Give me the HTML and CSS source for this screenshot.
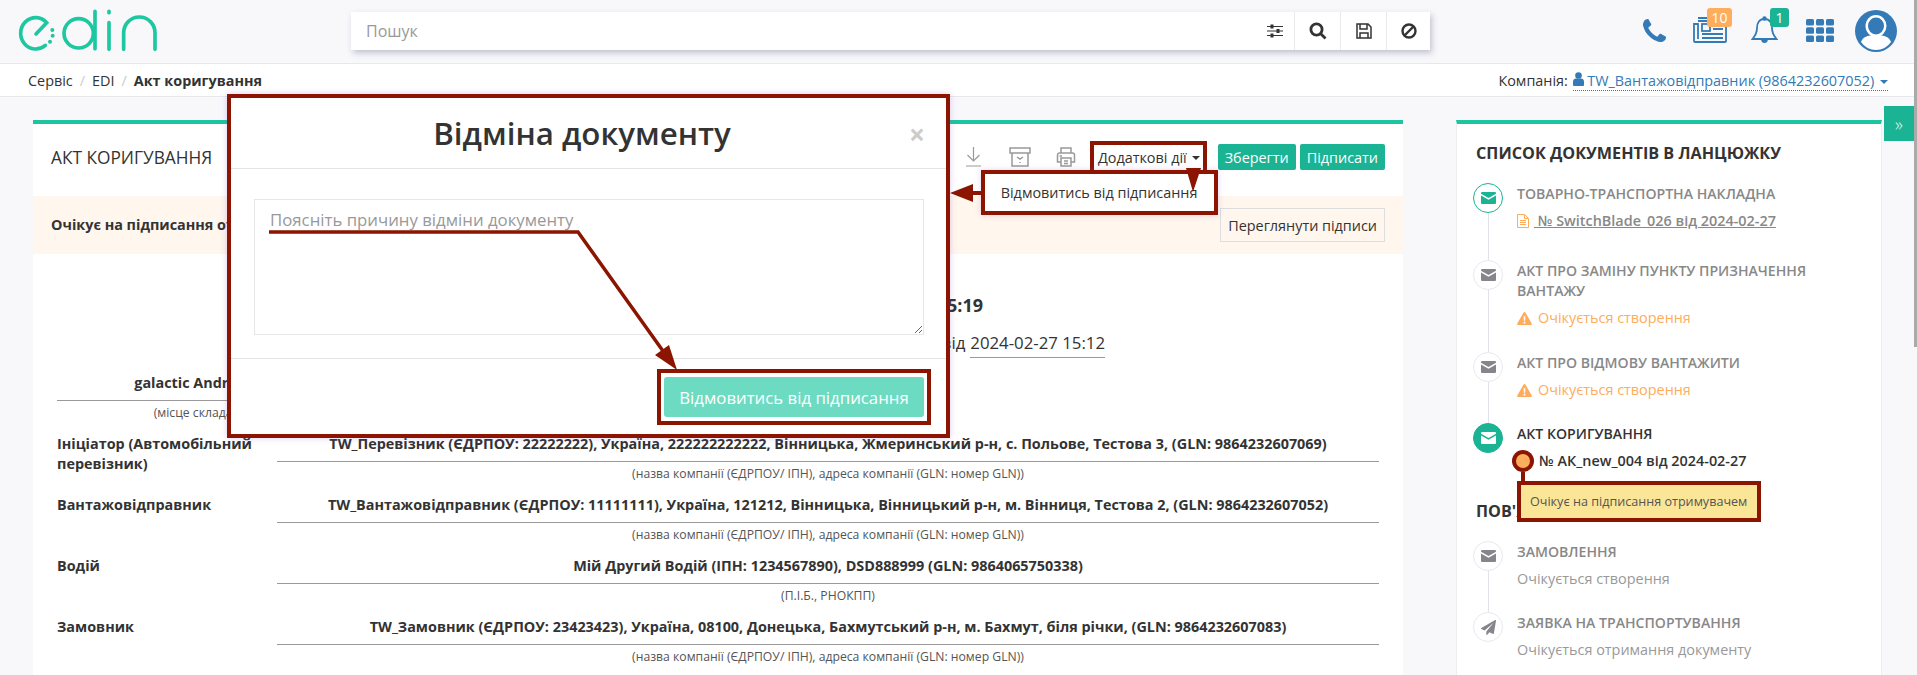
FILE: index.html
```html
<!DOCTYPE html>
<html lang="uk">
<head>
    <meta charset="UTF-8">
    <title>Акт коригування</title>
    <link rel="stylesheet" href="styles.css">
</head>
<body>
    <svg class="icon-defs" width="0" height="0">
        <symbol id="i-mail" viewBox="0 0 20 16">
            <path d="M1.500 0h17A1.500 1.500 0 0 1 20 1.500v.8L10 8 0 2.300v-.8A1.500 1.500 0 0 1 1.500 0zM0 4.600l10 5.700 10-5.700v9.900a1.500 1.500 0 0 1-1.500 1.500h-17A1.500 1.500 0 0 1 0 14.500z"/>
        </symbol>
        <symbol id="i-warn" viewBox="0 0 16 14">
            <path fill-rule="evenodd" d="M8 0c.4 0 .8.200 1 .6l6.800 11.800c.4.700-.1 1.600-1 1.600H1.200c-.9 0-1.400-.9-1-1.600L7 .6C7.200.2 7.600 0 8 0zM7 4.500l.3 5h1.400l.3-5zM7 10.500V12.300h2V10.500z"/>
        </symbol>
    </svg>

    <!-- Top bar -->
    <header class="topbar">
        <svg class="logo" viewBox="0 0 480 186" width="160" height="62">
            <g fill="none" stroke="#1dc7a0" stroke-width="11" stroke-linecap="round">
                <path d="M78 102L110 68A45 47 0 1 0 106 136"/>
                <circle cx="206" cy="100" r="44"/>
                <path d="M255 34V146M297 34V38M297 68V148M341 148V98A47 47 0 0 1 435 98V148"/>
            </g>
            <g fill="#1dc7a0">
                <circle cx="127" cy="90" r="6"/>
                <circle cx="128" cy="107" r="6"/>
                <circle cx="120" cy="125" r="6"/>
            </g>
        </svg>

        <div class="search">
            <input class="search-input" type="text" placeholder="Пошук">
            <span class="search-btn search-btn-plain">
                <svg width="16" height="14" viewBox="0 0 16 14" fill="none" stroke="#333" stroke-width="1.200">
                    <path d="M0 2.500h16M0 7h16M0 11.500h16"/>
                    <path stroke-width="3" d="M5 .5v4M11 5v4M5 9.500v4"/>
                </svg>
            </span>
            <span class="search-btn">
                <svg width="18" height="18" viewBox="0 0 18 18" fill="none" stroke="#333" stroke-width="2.800">
                    <circle cx="7.500" cy="7.500" r="5.600"/>
                    <path d="M11.500 11.500L16.500 16.500"/>
                </svg>
            </span>
            <span class="search-btn">
                <svg width="16" height="16" viewBox="0 0 16 16" fill="none" stroke="#333" stroke-width="1.500">
                    <path d="M1 1H12L15 4V15H1Z"/>
                    <path d="M4 1V6H11V1M4 15V10H12V15"/>
                </svg>
            </span>
            <span class="search-btn">
                <svg width="16" height="16" viewBox="0 0 16 16" fill="none" stroke="#333" stroke-width="2.400">
                    <circle cx="8" cy="8" r="6.500"/>
                    <path d="M3.500 12.500L12.500 3.500"/>
                </svg>
            </span>
        </div>

        <nav class="top-icons">
            <span class="top-icon">
                <svg width="23" height="23" viewBox="0 0 1408 1408" fill="#337ab7">
                    <path d="M1408 1112q0 27-10 70.500t-21 68.500q-21 50-122 106-94 51-186 51-27 0-53-3.500t-57.500-12.500-47-14.500-55.500-20.500-49-18q-98-35-175-83-127-79-264-216t-216-264q-48-77-83-175-3-9-18-49t-20.500-55.500-14.500-47-12.500-57.500-3.500-53q0-92 51-186 56-101 106-122 25-11 68.500-21t70.500-10q14 0 21 3 18 6 53 76 11 19 30 54t35 63.500 31 53.500q3 4 17.500 25t21.500 35.500 7 28.500q0 20-28.500 50t-62 55-62 53-28.500 46q0 9 5 22.500t8.500 20.500 14 24 11.500 19q76 137 174 235t235 174q2 1 19 11.500t24 14 20.500 8.500 22.500 5q18 0 46-28.500t53-62 55-62 50-28.500q14 0 28.500 7t35.500 21.500 25 17.500q25 15 53.500 31t63.500 35 54 30q70 35 76 53 3 7 3 21z"/>
                </svg>
            </span>
            <span class="top-icon">
                <svg width="34" height="26" viewBox="0 0 34 26" fill="none" stroke="#337ab7" stroke-width="1.800">
                    <path d="M5 4H33V24a1 1 0 0 1-1 1H2a1 1 0 0 1-1-1V7H5V22"/>
                    <path d="M5 1H27V4"/>
                    <rect x="9" y="7" width="8" height="7"/>
                    <path d="M20 8H30M20 12H30M9 17H30M9 21H30"/>
                </svg>
                <b class="badge badge-orange">10</b>
            </span>
            <span class="top-icon">
                <svg width="27" height="28" viewBox="0 0 27 28" fill="none" stroke="#337ab7" stroke-width="1.800">
                    <path d="M13.500 3C8 3 6 7.500 6 12C6 18 3 21 1.500 23H25.500C24 21 21 18 21 12C21 7.500 19 3 13.500 3Z"/>
                    <path d="M11 23a2.500 3 0 0 0 5 0" fill="#337ab7"/>
                    <circle cx="13.500" cy="2.500" r="1.300"/>
                </svg>
                <b class="badge badge-teal">1</b>
            </span>
            <span class="top-icon">
                <svg width="28" height="23" viewBox="0 0 28 23" fill="#337ab7">
                    <rect width="8" height="6.500" rx="1.500"/><rect x="10" width="8" height="6.500" rx="1.500"/><rect x="20" width="8" height="6.500" rx="1.500"/>
                    <rect y="8.200" width="8" height="6.500" rx="1.500"/><rect x="10" y="8.200" width="8" height="6.500" rx="1.500"/><rect x="20" y="8.200" width="8" height="6.500" rx="1.500"/>
                    <rect y="16.500" width="8" height="6.500" rx="1.500"/><rect x="10" y="16.500" width="8" height="6.500" rx="1.500"/><rect x="20" y="16.500" width="8" height="6.500" rx="1.500"/>
                </svg>
            </span>
            <span class="top-icon top-icon-avatar">
                <svg width="42" height="42" viewBox="0 0 42 42">
                    <circle cx="21" cy="21" r="21" fill="#337ab7"/>
                    <path d="M6 32C8 27 12 25 21 25S34 27 36 32A18 18 0 0 1 6 32Z" fill="#fff"/>
                    <ellipse cx="21" cy="16" rx="10.500" ry="11" fill="#fff"/>
                    <ellipse cx="21" cy="16" rx="8" ry="8.500" fill="#337ab7"/>
                </svg>
            </span>
        </nav>
    </header>

    <!-- Breadcrumbs -->
    <div class="crumbs">
        <div class="crumbs-path">
            <a>Сервіс</a><span class="crumb-sep">/</span><a>EDI</a><span class="crumb-sep">/</span><b>Акт коригування</b>
        </div>
        <div class="company">
            <span>Компанія:</span>
            <a class="company-link">
                <svg width="11" height="14" viewBox="0 0 11 14" fill="#337ab7">
                    <circle cx="5.500" cy="3.500" r="3.300"/>
                    <path d="M0 13V9.500C0 7.500 1.500 6.500 3 6.500H8C9.500 6.500 11 7.500 11 9.500V13a1 1 0 0 1-1 1H1a1 1 0 0 1-1-1z"/>
                </svg>
                TW_Вантажовідправник (9864232607052)
                <i class="caret caret-blue"></i>
            </a>
        </div>
    </div>

    <main class="page">
        <!-- Document -->
        <section class="panel doc">
            <div class="doc-head">
                <h2 class="doc-title">АКТ КОРИГУВАННЯ</h2>
                <div class="doc-tools">
                    <span class="tool-icon">
                        <svg width="15" height="20" viewBox="0 0 15 20" fill="none" stroke="#999" stroke-width="1.200">
                            <path d="M7.500 0V14M1.500 8L7.500 14L13.500 8M0 19H15"/>
                        </svg>
                    </span>
                    <span class="tool-icon">
                        <svg width="22" height="20" viewBox="0 0 22 20" fill="none" stroke="#999" stroke-width="1.500">
                            <path d="M1 1H21V6H1ZM3 6V19H19V6M8 10L11 12L14 10M11 15V16"/>
                        </svg>
                    </span>
                    <span class="tool-icon">
                        <svg width="20" height="20" viewBox="0 0 20 20" fill="none" stroke="#999" stroke-width="1.500">
                            <path d="M5 6V1H15V6M5 15H1.500V8A2 2 0 0 1 3.500 6H16.500A2 2 0 0 1 18.500 8V15H15"/>
                            <path d="M5 11H15V19H5ZM8 14H12M8 16.500H12M3.500 9H6"/>
                        </svg>
                    </span>
                    <div class="more">
                        Додаткові дії <i class="caret"></i>
                        <div class="more-menu">Відмовитись від підписання</div>
                    </div>
                    <button class="btn btn-save">Зберегти</button>
                    <button class="btn">Підписати</button>
                </div>
            </div>

            <div class="doc-status">
                <b>Очікує на підписання отримувачем</b>
                <button class="btn-outline">Переглянути підписи</button>
            </div>

            <div class="doc-body">
                <h3 class="doc-name">АКТ КОРИГУВАННЯ № AK_new_004 від 2024-02-27 15:19</h3>
                <div class="doc-ref">до ТТН № SwitchBlade_026 від <span class="doc-date">2024-02-27 15:12</span></div>

                <div class="place">
                    <div class="field-value">galactic Andromeda</div>
                    <div class="field-hint">(місце складання)</div>
                </div>

                <div class="field">
                    <div class="field-label">Ініціатор (Автомобільний перевізник)</div>
                    <div>
                        <div class="field-value">TW_Перевізник (ЄДРПОУ: 22222222), Україна, 222222222222, Вінницька, Жмеринський р-н, с. Польове, Тестова 3, (GLN: 9864232607069)</div>
                        <div class="field-hint">(назва компанії (ЄДРПОУ/ ІПН), адреса компанії (GLN: номер GLN))</div>
                    </div>
                </div>
                <div class="field">
                    <div class="field-label">Вантажовідправник</div>
                    <div>
                        <div class="field-value">TW_Вантажовідправник (ЄДРПОУ: 11111111), Україна, 121212, Вінницька, Вінницький р-н, м. Вінниця, Тестова 2, (GLN: 9864232607052)</div>
                        <div class="field-hint">(назва компанії (ЄДРПОУ/ ІПН), адреса компанії (GLN: номер GLN))</div>
                    </div>
                </div>
                <div class="field">
                    <div class="field-label">Водій</div>
                    <div>
                        <div class="field-value">Мій Другий Водій (ІПН: 1234567890), DSD888999 (GLN: 9864065750338)</div>
                        <div class="field-hint">(П.І.Б., РНОКПП)</div>
                    </div>
                </div>
                <div class="field">
                    <div class="field-label">Замовник</div>
                    <div>
                        <div class="field-value">TW_Замовник (ЄДРПОУ: 23423423), Україна, 08100, Донецька, Бахмутський р-н, м. Бахмут, біля річки, (GLN: 9864232607083)</div>
                        <div class="field-hint">(назва компанії (ЄДРПОУ/ ІПН), адреса компанії (GLN: номер GLN))</div>
                    </div>
                </div>
            </div>
        </section>

        <!-- Chain of documents -->
        <aside class="panel chain">
            <h2 class="chain-title">СПИСОК ДОКУМЕНТІВ В ЛАНЦЮЖКУ</h2>

            <div class="step step-first">
                <div class="step-mark">
                    <span class="step-dot step-dot-done"><svg width="15" height="12"><use href="#i-mail"/></svg></span>
                    <span class="step-line"></span>
                </div>
                <div class="step-text">
                    <div class="step-name">ТОВАРНО-ТРАНСПОРТНА НАКЛАДНА</div>
                    <div class="step-meta step-link">
                        <svg width="12" height="14" viewBox="0 0 12 14" fill="none" stroke="#fdad5c">
                            <path d="M.5.500H7.500L11.500 4.500V13.500H.5ZM7.500.500V4.500H11.500M3 6.500H9M3 8.500H9M3 10.500H9"/>
                        </svg>
                        <u>&nbsp;№ SwitchBlade_026 від 2024-02-27</u>
                    </div>
                </div>
            </div>

            <div class="step step-tall">
                <div class="step-mark">
                    <span class="step-dot"><svg width="15" height="12"><use href="#i-mail"/></svg></span>
                    <span class="step-line"></span>
                </div>
                <div class="step-text">
                    <div class="step-name">АКТ ПРО ЗАМІНУ ПУНКТУ ПРИЗНАЧЕННЯ ВАНТАЖУ</div>
                    <div class="step-meta step-wait"><svg width="15" height="13"><use href="#i-warn"/></svg>Очікується створення</div>
                </div>
            </div>

            <div class="step">
                <div class="step-mark">
                    <span class="step-dot"><svg width="15" height="12"><use href="#i-mail"/></svg></span>
                    <span class="step-line"></span>
                </div>
                <div class="step-text">
                    <div class="step-name">АКТ ПРО ВІДМОВУ ВАНТАЖИТИ</div>
                    <div class="step-meta step-wait"><svg width="15" height="13"><use href="#i-warn"/></svg>Очікується створення</div>
                </div>
            </div>

            <div class="step step-last">
                <div class="step-mark">
                    <span class="step-dot step-dot-current"><svg width="15" height="12"><use href="#i-mail"/></svg></span>
                </div>
                <div class="step-text">
                    <div class="step-name step-name-current">АКТ КОРИГУВАННЯ</div>
                    <div class="step-meta step-number">
                        <span class="state-dot"></span>№ АК_new_004 від 2024-02-27
                        <div class="state-tip">Очікує на підписання отримувачем</div>
                    </div>
                </div>
            </div>

            <h2 class="chain-title">ПОВ'ЯЗАНІ ДОКУМЕНТИ</h2>

            <div class="step">
                <div class="step-mark">
                    <span class="step-dot"><svg width="15" height="12"><use href="#i-mail"/></svg></span>
                    <span class="step-line"></span>
                </div>
                <div class="step-text">
                    <div class="step-name">ЗАМОВЛЕННЯ</div>
                    <div class="step-meta">Очікується створення</div>
                </div>
            </div>

            <div class="step">
                <div class="step-mark">
                    <span class="step-dot">
                        <svg width="15" height="15" viewBox="0 0 1792 1792"><path d="M1764 11q33 24 27 64l-256 1536q-5 29-32 45-14 8-31 8-11 0-24-5l-453-185-242 295q-18 23-49 23-13 0-22-4-19-7-30.500-23.500t-11.500-36.500v-349l864-1059-1069 925-395-162q-37-14-40-55-2-40 32-59l1664-960q15-9 32-9 20 0 36 11z"/></svg>
                    </span>
                </div>
                <div class="step-text">
                    <div class="step-name">ЗАЯВКА НА ТРАНСПОРТУВАННЯ</div>
                    <div class="step-meta">Очікується отримання документу</div>
                </div>
            </div>
        </aside>
    </main>

    <button class="side-toggle">»</button>
    <div class="scroll-thumb"></div>

    <!-- Dialog -->
    <div class="modal">
        <div class="modal-head">
            <h1 class="modal-title">Відміна документу</h1>
            <span class="modal-close">×</span>
        </div>
        <div class="modal-body">
            <textarea class="modal-text" placeholder="Поясніть причину відміни документу"></textarea>
        </div>
        <div class="modal-foot">
            <div class="modal-action">
                <button class="btn-reject">Відмовитись від підписання</button>
            </div>
        </div>
    </div>

    <!-- Arrows drawn over the screenshot -->
    <svg class="marks" width="1917" height="675" viewBox="0 0 1917 675">
        <path d="M269 232H578L668 358" fill="none" stroke="#8b1500" stroke-width="3.500"/>
        <path d="M677 370L655 355L669 345Z" fill="#8b1500"/>
        <path d="M950 193L973 184V191H981V195H973V202Z" fill="#8b1500"/>
        <path d="M1186 168H1201L1193 192Z" fill="#8b1500"/>
    </svg>
</body>
</html>
```

FILE: styles.css
```css
/* Reset */
* {
    box-sizing: border-box;
}

body {
    position: relative;
    margin: 0;
    width: 1917px;
    height: 675px;
    overflow: hidden;
    font-family: "Open Sans", "Noto Sans", sans-serif;
    font-size: 14.4px;
    line-height: 20px;
    color: #333;
    background: #f8f8fb;
}

h1, h2, h3 {
    margin: 0;
}

.icon-defs {
    position: absolute;
}

/* Top bar */
.topbar {
    display: flex;
    align-items: flex-start;
    height: 64px;
    padding-left: 10px;
    border-bottom: 1px solid #e7e7ec;
}

.logo {
    flex: none;
}

.search {
    display: flex;
    width: 1079px;
    height: 38px;
    margin: 12px 0 0 181px;
    background: #fff;
    box-shadow: 2px 3px 6px rgba(70, 70, 110, 0.3);
}

.search-input {
    flex: 1;
    min-width: 0;
    padding: 0 15px;
    border: none;
    outline: none;
    background: none;
    font: 16px "Open Sans", sans-serif;
}

.search-input::placeholder,
.modal-text::placeholder {
    color: #999;
    opacity: 1;
}

.search-btn {
    display: flex;
    align-items: center;
    justify-content: center;
    width: 46px;
    border-left: 1px solid #e9e9ee;
}

.search-btn-plain {
    width: 38px;
    border-left: none;
}

.search-btn:last-child {
    width: 44px;
}

.top-icons {
    display: flex;
    margin-left: 197px;
}

.top-icon {
    position: relative;
    display: flex;
    align-items: center;
    justify-content: center;
    width: 55px;
    height: 60px;
}

.top-icon-avatar {
    width: 56px;
    height: 62px;
    padding-left: 1px;
}

.badge {
    position: absolute;
    top: 8px;
    display: block;
    height: 19px;
    border-radius: 3px;
    font-size: 14px;
    font-weight: 400;
    line-height: 19px;
    text-align: center;
    color: #fff;
}

.badge-orange {
    left: 25px;
    width: 25px;
    background: #fdad5c;
}

.badge-teal {
    left: 33px;
    width: 19px;
    background: #1ab394;
}

/* Breadcrumbs */
.crumbs {
    display: flex;
    justify-content: space-between;
    height: 33px;
    padding: 7px 29px 0 28px;
    background: #fff;
    border-bottom: 1px solid #e7e7ec;
}

.crumb-sep {
    margin: 0 7px;
    color: #ccc;
}

.company {
    white-space: nowrap;
}

.company-link {
    display: inline-block;
    margin-left: 1px;
    color: #337ab7;
    border-bottom: 1px dotted #337ab7;
    line-height: 19px;
}

.caret {
    display: inline-block;
    margin-left: 2px;
    vertical-align: middle;
    border-top: 4px solid #333;
    border-left: 4px solid transparent;
    border-right: 4px solid transparent;
}

.caret-blue {
    border-top-color: #337ab7;
}

/* Layout */
.page {
    display: flex;
    gap: 53px;
    padding: 23px 0 0 33px;
}

.panel {
    background: #fff;
    border-top: 4px solid #1dc4a1;
}

.doc {
    flex: none;
    width: 1370px;
}

.chain {
    flex: none;
    width: 426px;
    height: 560px;
    padding: 18px 0 0 19px;
    border-left: 1px solid #ececf1;
    border-right: 1px solid #ececf1;
}

/* Document header */
.doc-head {
    display: flex;
    justify-content: space-between;
    height: 72px;
    padding: 20px 18px 0;
}

.doc-title {
    padding-top: 7px;
    font-size: 17.3px;
    font-weight: 500;
    line-height: 14px;
}

.doc-tools {
    display: flex;
    align-items: flex-start;
}

.tool-icon {
    display: flex;
    align-items: center;
    justify-content: center;
    width: 46px;
    height: 26px;
}

.more {
    position: relative;
    display: flex;
    align-items: center;
    height: 30px;
    margin: -3px 11px 0 1px;
    padding: 0 3px 0 4px;
    border: 4px solid #8b1500;
    border-bottom: none;
    white-space: nowrap;
}

.more .caret {
    margin-left: 5px;
}

.more-menu {
    position: absolute;
    top: 25px;
    right: -15px;
    width: 237px;
    height: 45px;
    padding-left: 16px;
    line-height: 37px;
    background: #fff;
    border: 4px solid #8b1500;
    box-shadow: 0 0 6px rgba(150, 80, 200, 0.25);
}

.btn {
    height: 26px;
    margin-left: 4px;
    padding: 0 7px;
    border: none;
    border-radius: 2px;
    background: #1ab394;
    color: #fff;
    font: 14.4px "Open Sans", sans-serif;
}

.btn-save {
    margin-left: 0;
}

/* Status banner */
.doc-status {
    display: flex;
    justify-content: space-between;
    height: 58px;
    padding: 12px 18px 0;
    background: #fff6ed;
}

.doc-status b {
    font-weight: 700;
    line-height: 34px;
}

.btn-outline {
    height: 34px;
    padding: 0 7px;
    border: 1px solid #ddd;
    background: none;
    color: #333;
    font: 14.4px "Open Sans", sans-serif;
}

/* Document body */
.doc-body {
    padding: 39px 24px 0;
}

.doc-name {
    padding-right: 396px;
    font-size: 18px;
    line-height: 24px;
    text-align: right;
}

.doc-ref {
    display: flex;
    justify-content: flex-end;
    gap: 5px;
    height: 40px;
    margin-top: 14px;
    padding-right: 274px;
    font-size: 16.8px;
    line-height: 24px;
}

.doc-date {
    height: 31px;
    margin-top: -4px;
    padding-top: 4px;
    border-bottom: 1px solid #999;
}

.place {
    width: 298px;
    margin-top: 2px;
    text-align: center;
}

.field {
    display: grid;
    grid-template-columns: 220px 1fr;
    height: 61px;
}

.field-label {
    padding-right: 20px;
    font-weight: 700;
}

.field-value {
    padding-bottom: 7px;
    border-bottom: 1px solid #999;
    font-weight: 700;
    text-align: center;
}

.field-hint {
    height: 33px;
    padding-top: 4px;
    font-size: 12.2px;
    line-height: 16px;
    text-align: center;
    color: #555;
}

/* Chain of documents */
.chain-title {
    margin-bottom: 19px;
    font-size: 16.2px;
    font-weight: 700;
    line-height: 22px;
}

.step {
    display: flex;
    gap: 14px;
    margin-left: -3px;
}

.step-mark {
    display: flex;
    flex-direction: column;
    align-items: center;
    flex: none;
    width: 30px;
}

.step-dot {
    display: flex;
    align-items: center;
    justify-content: center;
    flex: none;
    width: 30px;
    height: 30px;
    border-radius: 50%;
    border: 1px solid #e8e8ee;
    fill: #85858c;
}

.step-dot-done {
    border-color: #1ab394;
    fill: #1ab394;
}

.step-dot-current {
    border-color: #1ab394;
    background: #1ab394;
    fill: #fff;
}

.step-line {
    flex: 1;
    width: 1px;
    background: #e0e3e8;
}

.step-text {
    width: 345px;
    padding: 1px 0 23px;
    color: #999;
}

.step-first .step-text,
.step-last .step-text {
    padding-bottom: 29px;
}

.step-tall .step-text {
    padding-bottom: 24px;
}

.step-name {
    font-size: 14.1px;
    font-weight: 600;
    color: #888;
}

.step-name-current {
    color: #333;
}

.step-meta {
    position: relative;
    display: flex;
    align-items: center;
    margin-top: 7px;
}

.step-link {
    gap: 5px;
    font-weight: 600;
    color: #888;
}

.step-wait {
    gap: 6px;
    color: #fdad5c;
    fill: #fdad5c;
}

.step-number {
    font-weight: 600;
    color: #333;
}

.state-dot {
    flex: none;
    width: 14px;
    height: 14px;
    margin: 0 9px 0 -1px;
    border-radius: 50%;
    background: #fdad5c;
    box-shadow: 0 0 0 4px #8b1500;
}

.state-tip {
    position: absolute;
    top: 30px;
    left: 0;
    width: 244px;
    height: 41px;
    padding-left: 9px;
    border: 4px solid #8b1500;
    background: #fbe698;
    font-size: 12.6px;
    font-weight: 400;
    line-height: 33px;
    color: #555;
    white-space: nowrap;
}

.state-tip::before {
    content: "";
    position: absolute;
    left: 0;
    top: -13px;
    width: 4px;
    height: 9px;
    background: #8b1500;
}

/* Side toggle and scrollbar */
.side-toggle {
    position: absolute;
    top: 106px;
    left: 1884px;
    width: 30px;
    height: 35px;
    padding: 0;
    border: none;
    background: #1ab394;
    color: #e6f7f3;
    font: 300 18px "Open Sans", sans-serif;
}

.scroll-thumb {
    position: absolute;
    top: 0;
    right: 0;
    width: 3px;
    height: 347px;
    background: #aaa;
}

/* Dialog */
.modal {
    position: absolute;
    top: 94px;
    left: 227px;
    width: 723px;
    height: 344px;
    background: #fff;
    border: 4px solid #8b1500;
    box-shadow: 0 0 6px rgba(150, 80, 200, 0.3);
}

.modal-head {
    position: relative;
    height: 71px;
    padding-right: 13px;
    border-bottom: 1px solid #e5e5e5;
}

.modal-title {
    font-size: 31.3px;
    font-weight: 600;
    line-height: 70px;
    text-align: center;
}

.modal-close {
    position: absolute;
    top: 21px;
    right: 21px;
    font-size: 28px;
    font-weight: 700;
    line-height: 30px;
    color: #ccc;
}

.modal-body {
    height: 190px;
    padding: 30px 22px 0 23px;
    border-bottom: 1px solid #e5e5e5;
}

.modal-text {
    display: block;
    width: 670px;
    height: 136px;
    padding: 10px 15px;
    border: 1px solid #e5e6e7;
    outline: none;
    font: 16.8px/20px "Open Sans", sans-serif;
}

.modal-foot {
    display: flex;
    justify-content: flex-end;
    padding: 10px 15px 0;
}

.modal-action {
    width: 274px;
    height: 56px;
    padding: 4px 3px;
    border: 4px solid #8b1500;
}

.btn-reject {
    display: block;
    width: 260px;
    height: 40px;
    border: none;
    border-radius: 3px;
    background: #6cdbc2;
    color: #fff;
    font: 16.8px "Open Sans", sans-serif;
}

/* Annotation arrows */
.marks {
    position: absolute;
    top: 0;
    left: 0;
    pointer-events: none;
}
```
